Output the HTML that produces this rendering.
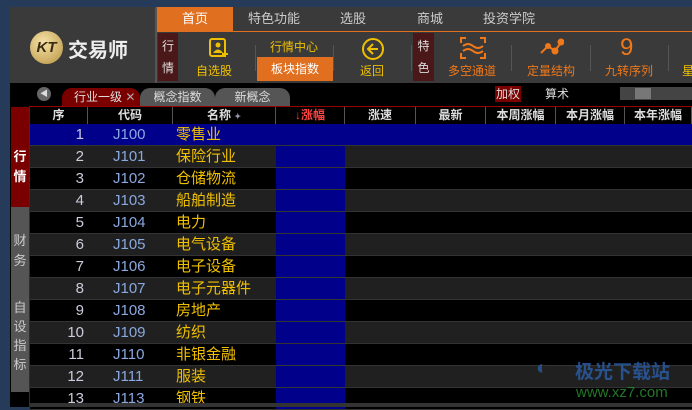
<!DOCTYPE html><html><head><meta charset="utf-8"><style>
*{margin:0;padding:0;box-sizing:border-box}
body{width:692px;height:407px;overflow:hidden;background:#263a5a;font-family:"Liberation Sans","Noto Sans CJK SC",sans-serif;position:relative}
.a{position:absolute}
.hdr{left:10px;top:7px;width:682px;height:76px;background:#3a3a3a}
.main{left:10px;top:83px;width:682px;height:324px;background:#000}
.menu{top:7px;height:24px;font-size:13px;color:#ccc;line-height:24px}
.tb{font-size:12px;text-align:center}
.row{left:30px;width:662px;height:22px;font-size:15px;line-height:22px;border-bottom:1px solid #333}
.row span{position:absolute;top:0}
.hd span{position:absolute;top:0;font-weight:bold;color:#ddd;font-size:12px;text-align:center;border-right:1px solid #555;height:17px;line-height:17px}
.sep{width:1px;height:26px;background:#555;top:45px}
.side{left:11px;width:18px;color:#ccc;font-size:13px;text-align:center;line-height:20px}
</style></head><body>
<div class="a hdr"></div>
<div class="a" style="left:30px;top:31px;width:33px;height:33px;border-radius:50%;background:radial-gradient(circle at 40% 35%,#f5e2a8,#b89240);color:#3a2a10;font:italic bold 15px 'Liberation Sans';line-height:33px;text-align:center">KT</div>
<div class="a" style="left:68px;top:34px;color:#eee;font-size:20px;font-weight:bold">交易师</div>
<div class="a" style="left:155px;top:7px;width:2px;height:76px;background:#555"></div>
<div class="a" style="left:157px;top:7px;width:535px;height:25px;border-bottom:1px solid #e07020"></div>
<div class="a menu" style="left:157px;width:76px;background:#e07020;color:#fff;text-align:center">首页</div>
<div class="a menu" style="left:248px">特色功能</div>
<div class="a menu" style="left:340px">选股</div>
<div class="a menu" style="left:417px">商城</div>
<div class="a menu" style="left:483px">投资学院</div>
<div class="a" style="left:158px;top:33px;width:20px;height:48px;background:#4a1818;color:#ddd;font-size:12px;text-align:center;line-height:22px;padding-top:2px">行<br>情</div>
<svg class="a" style="left:208px;top:37px" width="22" height="22" viewBox="0 0 22 22"><rect x="2" y="2" width="15" height="17" rx="2" fill="none" stroke="#f0c000" stroke-width="2"/><circle cx="10" cy="8" r="2.5" fill="#f0c000"/><path d="M5 16q5-7 10 0" fill="#f0c000"/><path d="M17 14v6M14 17h6" stroke="#f0c000" stroke-width="2"/></svg>
<div class="a tb" style="left:196px;top:62px;color:#f0c000">自选股</div>
<div class="a sep" style="left:255px"></div>
<div class="a tb" style="left:270px;top:38px;color:#f0c000">行情中心</div>
<div class="a tb" style="left:257px;top:57px;width:76px;height:24px;line-height:24px;background:#e07020;color:#fff">板块指数</div>
<div class="a sep" style="left:333px"></div>
<svg class="a" style="left:361px;top:37px" width="24" height="24"><circle cx="12" cy="12" r="10" fill="none" stroke="#f0c000" stroke-width="2"/><path d="M17 12H8M12 7l-5 5 5 5" fill="none" stroke="#f0c000" stroke-width="2"/></svg>
<div class="a tb" style="left:360px;top:62px;color:#f0c000">返回</div>
<div class="a sep" style="left:411px"></div>
<div class="a" style="left:413px;top:33px;width:21px;height:48px;background:#4a1818;color:#ddd;font-size:12px;text-align:center;line-height:22px;padding-top:2px">特<br>色</div>
<svg class="a" style="left:460px;top:37px" width="26" height="22"><path d="M1 6V1h5M20 1h5v5M1 16v5h5M20 21h5v-5M3 9q5-4 10 0t10 0M3 14q5-4 10 0t10 0" fill="none" stroke="#f07818" stroke-width="2"/></svg>
<div class="a tb" style="left:448px;top:62px;color:#f07818">多空通道</div>
<div class="a sep" style="left:511px"></div>
<svg class="a" style="left:538px;top:38px" width="26" height="20"><path d="M3 15l7-7 7 5 7-10" stroke="#f07818" stroke-width="2" fill="none"/><circle cx="10" cy="8" r="3" fill="#f07818"/><circle cx="17" cy="13" r="3.5" fill="#f07818"/><circle cx="23" cy="4" r="3.5" fill="#f07818"/></svg>
<div class="a tb" style="left:527px;top:62px;color:#f07818">定量结构</div>
<div class="a sep" style="left:590px"></div>
<div class="a" style="left:620px;top:34px;color:#f07818;font-size:24px">9</div>
<div class="a tb" style="left:605px;top:62px;color:#f07818">九转序列</div>
<div class="a sep" style="left:668px"></div>
<div class="a tb" style="left:682px;top:62px;color:#f0c000">星</div>
<div class="a main"></div>
<div class="a" style="left:37px;top:87px;width:14px;height:14px;border-radius:50%;background:#666;color:#ddd;font-size:8px;text-align:center;line-height:14px">◀</div>
<div class="a" style="left:62px;top:88px;width:78px;height:19px;background:#7a0000;border-radius:10px 10px 0 0;color:#ddd;font-size:12px;line-height:19px;padding-left:12px">行业一级 <span style="color:#aaa">✕</span></div>
<div class="a" style="left:140px;top:88px;width:75px;height:19px;background:#555;border-radius:10px 10px 0 0;color:#ddd;font-size:12px;line-height:19px;text-align:center">概念指数</div>
<div class="a" style="left:215px;top:88px;width:75px;height:19px;background:#555;border-radius:10px 10px 0 0;color:#ddd;font-size:12px;line-height:19px;text-align:center">新概念</div>
<div class="a" style="left:495px;top:86px;width:26px;height:16px;background:#7a0000;color:#ddd;font-size:12px;line-height:16px;text-align:center">加权</div>
<div class="a" style="left:545px;top:86px;color:#ddd;font-size:12px;line-height:16px">算术</div>
<div class="a" style="left:620px;top:87px;width:72px;height:13px;background:#444"></div>
<div class="a" style="left:635px;top:88px;width:16px;height:11px;background:#777"></div>
<div class="a" style="left:29px;top:106px;width:663px;height:1px;background:#900"></div>
<div class="a" style="left:29px;top:107px;width:1px;height:300px;background:#900"></div>
<div class="a" style="left:11px;top:107px;width:18px;height:100px;background:#7a0000;border-radius:0 0 0 0;color:#fff;font-weight:bold;font-size:13px;text-align:center;line-height:20px;padding-top:40px">行<br>情</div>
<div class="a side" style="left:11px;top:207px;height:95px;background:#555;padding-top:24px">财<br>务</div>
<div class="a side" style="left:11px;top:292px;height:100px;background:#555;padding-top:6px;line-height:19px">自<br>设<br>指<br>标</div>
<div class="a hd" style="left:30px;top:107px;width:662px;height:17px;background:#000">
<span style="left:0;width:58px">序</span><span style="left:58px;width:85px">代码</span><span style="left:143px;width:103px">名称 <b style="font-size:8px;color:#99a">✦</b></span><span style="left:246px;width:69px;color:#f44">↓涨幅</span><span style="left:315px;width:71px">涨速</span><span style="left:386px;width:70px">最新</span><span style="left:456px;width:70px">本周涨幅</span><span style="left:526px;width:69px">本月涨幅</span><span style="left:595px;width:67px">本年涨幅</span></div>
<div id="rows"></div>
<div class="a" style="left:536px;top:357px;color:#2a5aa0;font-size:20px;font-weight:bold;opacity:.8">◐</div>
<div class="a" style="left:575px;top:357px;color:#2a5aa0;font-size:19px;font-weight:bold;opacity:.85">极光下载站</div>
<div class="a" style="left:576px;top:384px;color:#2a8a30;font-size:15px;opacity:.85">www.xz7.com</div>
<div class="a" style="left:30px;top:403px;width:662px;height:4px;background:#333"></div>
<script>
var n=["零售业","保险行业","仓储物流","船舶制造","电力","电气设备","电子设备","电子元器件","房地产","纺织","非银金融","服装","钢铁"];
var h="";for(var i=0;i<13;i++){var bg=i==0?"#00008a":(i%2?"#202020":"#000");var c=i==12?"J113":"J1"+String(i).padStart(2,"0");
h+='<div class="a row" style="top:'+(124+i*22)+'px;background:'+bg+'">'+'<span style="left:0;width:54px;text-align:right;color:#ccd">'+(i+1)+'</span><span style="left:83px;color:#8aa8e0">'+c+'</span><span style="left:146px;color:#f0c000">'+n[i]+'</span>'+(i?'<span style="left:246px;width:69px;height:21px;background:#00008a"></span>':'')+'</div>';}
document.getElementById("rows").innerHTML=h;
</script>
</body></html>
